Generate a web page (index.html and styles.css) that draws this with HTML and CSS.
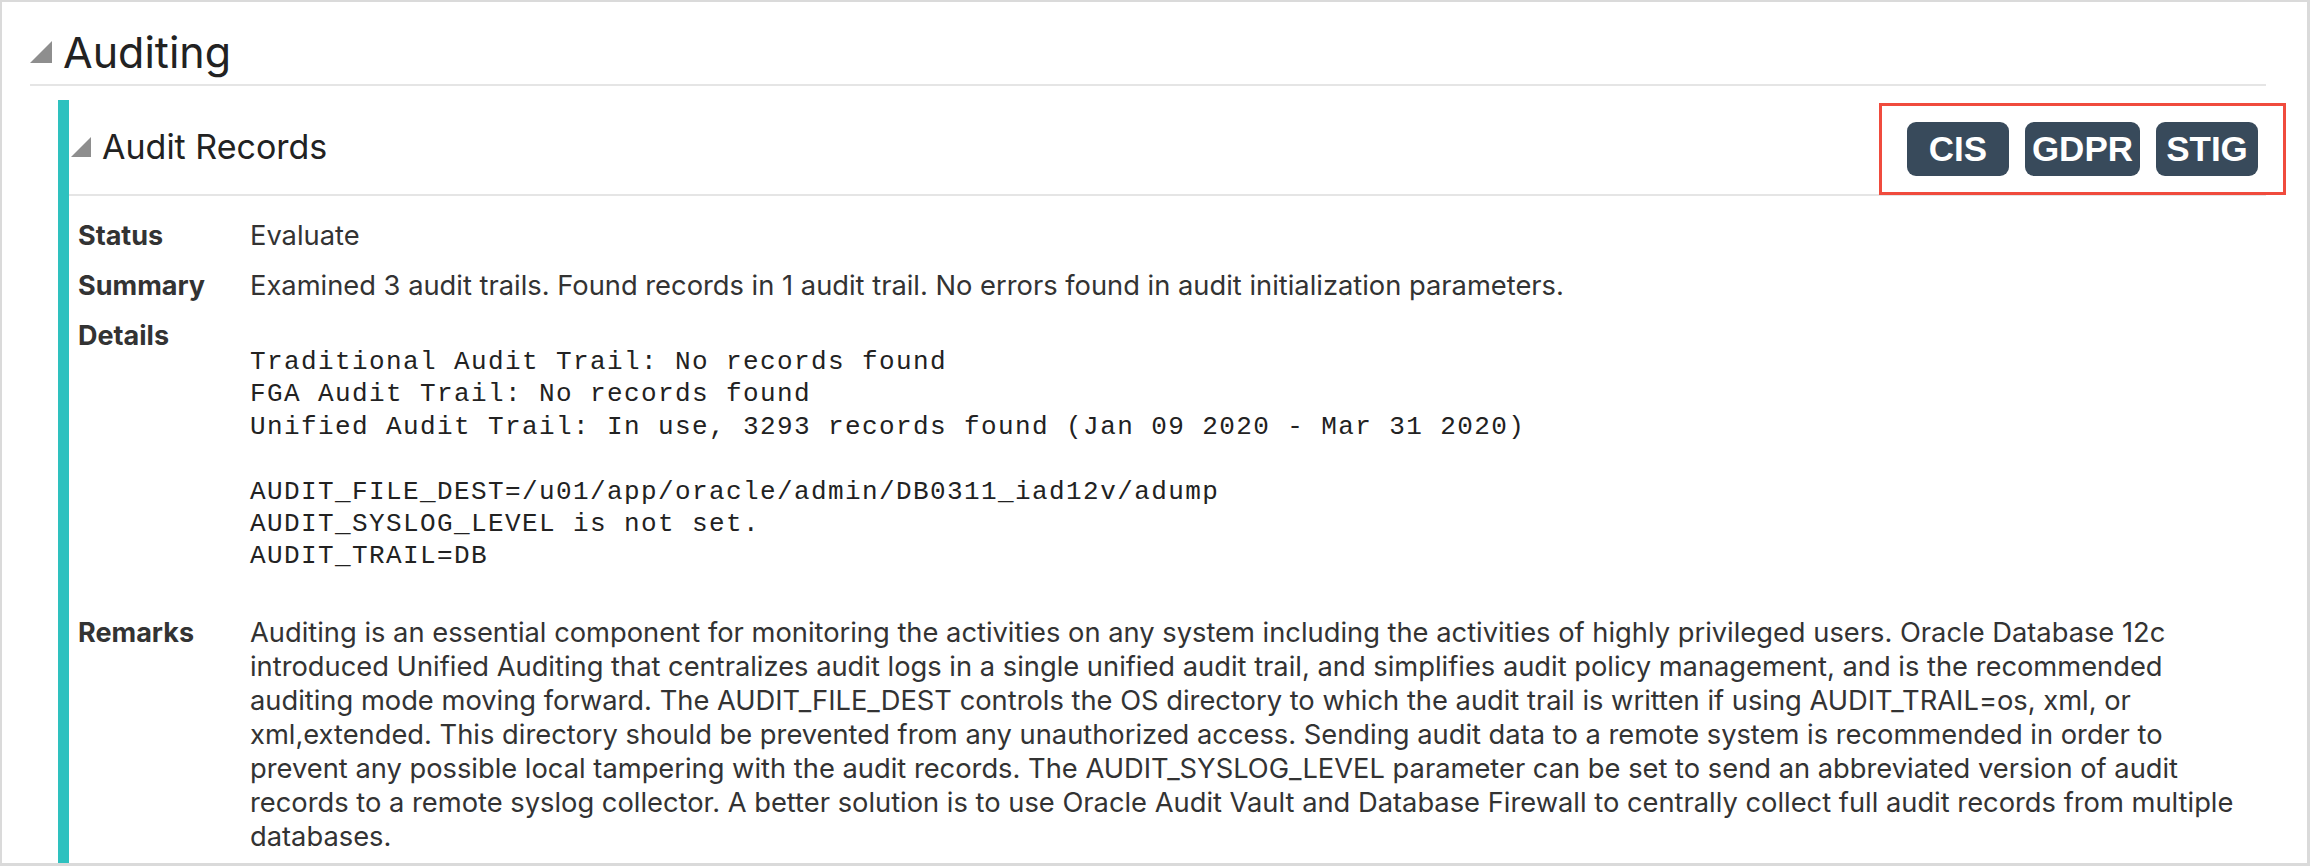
FILE: index.html
```html
<!DOCTYPE html>
<html lang="en">
<head>
<meta charset="utf-8">
<title>Auditing</title>
<link rel="stylesheet" href="styles.css">
</head>
<body>
<div class="frame">
  <div class="h1row">
    <span class="tri tri-lg"></span>
    <h1 class="h1">Auditing</h1>
  </div>
  <section class="check">
    <div class="check-head">
      <span class="tri tri-sm"></span>
      <h2 class="h2">Audit Records</h2>
      <div class="tags">
        <span class="tag">CIS</span>
        <span class="tag">GDPR</span>
        <span class="tag">STIG</span>
      </div>
    </div>
    <div class="check-body">
      <div class="row"><div class="lbl">Status</div><div class="val">Evaluate</div></div>
      <div class="row"><div class="lbl">Summary</div><div class="val">Examined 3 audit trails. Found records in 1 audit trail. No errors found in audit initialization parameters.</div></div>
      <div class="row"><div class="lbl">Details</div><div class="val"><pre class="mono">Traditional Audit Trail: No records found
FGA Audit Trail: No records found
Unified Audit Trail: In use, 3293 records found (Jan 09 2020 - Mar 31 2020)

AUDIT_FILE_DEST=/u01/app/oracle/admin/DB0311_iad12v/adump
AUDIT_SYSLOG_LEVEL is not set.
AUDIT_TRAIL=DB</pre></div></div>
      <div class="row"><div class="lbl">Remarks</div><div class="val lines">Auditing is an essential component for monitoring the activities on any system including the activities of highly privileged users. Oracle Database 12c<br>introduced Unified Auditing that centralizes audit logs in a single unified audit trail, and simplifies audit policy management, and is the recommended<br>auditing mode moving forward. The AUDIT_FILE_DEST controls the OS directory to which the audit trail is written if using AUDIT_TRAIL=os, xml, or<br>xml,extended. This directory should be prevented from any unauthorized access. Sending audit data to a remote system is recommended in order to<br>prevent any possible local tampering with the audit records. The AUDIT_SYSLOG_LEVEL parameter can be set to send an abbreviated version of audit<br>records to a remote syslog collector. A better solution is to use Oracle Audit Vault and Database Firewall to centrally collect full audit records from multiple<br>databases.</div></div>
    </div>
  </section>
</div>
</body>
</html>
```

FILE: styles.css
```css
html, body {
  margin: 0;
  padding: 0;
  background: #ffffff;
}

.frame {
  box-sizing: border-box;
  width: 2310px;
  height: 866px;
  border-style: solid;
  border-color: #dadada;
  border-width: 2px 3px 3px 2px;
  padding: 0 41px 0 28px;
  display: flex;
  flex-direction: column;
  overflow: hidden;
  background: #ffffff;
  font-family: Inter, "Noto Sans", sans-serif;
  color: #333333;
}

.h1row {
  flex: none;
  display: flex;
  align-items: center;
  height: 64px;
  padding-top: 18px;
  border-bottom: 2px solid #e5e5e5;
}

.tri {
  display: block;
  width: 0;
  height: 0;
  flex: none;
}

.tri-lg {
  border-left: 22px solid transparent;
  border-bottom: 22px solid #8e8e8e;
  margin-right: 11px;
}

.h1 {
  margin: 0;
  font-size: 43px;
  font-weight: 400;
  line-height: 64px;
  color: #222222;
}

.check {
  flex: 1;
  margin: 14px 0 0 28px;
  border-left: 11px solid #2ec1bf;
  display: flex;
  flex-direction: column;
}

.check-head {
  flex: none;
  display: flex;
  align-items: center;
  height: 94px;
  padding-left: 2px;
  border-bottom: 2px solid #e5e5e5;
}

.tri-sm {
  border-left: 20px solid transparent;
  border-bottom: 20px solid #8e8e8e;
  margin-right: 11px;
}

.h2 {
  margin: 0;
  font-size: 34px;
  font-weight: 400;
  line-height: 40px;
  color: #222222;
}

.tags {
  position: relative;
  margin-left: auto;
  margin-right: 8px;
  margin-top: 4px;
  display: flex;
  gap: 16px;
}

.tags::after {
  content: "";
  position: absolute;
  top: -19px;
  bottom: -19px;
  left: -28px;
  right: -28px;
  border: 3px solid #f04b3d;
}

.tag {
  box-sizing: border-box;
  min-width: 102px;
  height: 54px;
  padding: 0 7px;
  border-radius: 9px;
  background: #384a5b;
  color: #ffffff;
  font-family: "Liberation Sans", Arial, sans-serif;
  font-weight: 700;
  font-size: 35px;
  line-height: 54px;
  text-align: center;
}

.check-body {
  padding: 15px 0 0 9px;
}

.row {
  display: grid;
  grid-template-columns: 172px 1fr;
  padding: 8px 0;
  font-size: 27.3px;
  line-height: 34px;
}

.lbl {
  font-weight: 700;
  font-size: 27px;
  color: #333333;
}

.val {
  min-width: 0;
}

.lines {
  white-space: nowrap;
}

.mono {
  margin: 27px 0;
  font-family: "Liberation Mono", "Courier New", monospace;
  font-size: 26px;
  letter-spacing: 1.4px;
  line-height: 32.4px;
  color: #222222;
}
```
